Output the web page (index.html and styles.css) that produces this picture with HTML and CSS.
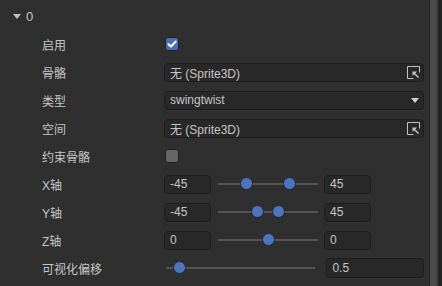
FILE: index.html
```html
<!DOCTYPE html>
<html lang="zh">
<head>
    <meta charset="UTF-8">
    <title>Inspector</title>
    <link rel="stylesheet" href="styles.css">
</head>
<body>
    <div class="inspector">
        <div class="panel">
            <div class="header">
                <span class="caret"></span>
                <span class="title">0</span>
            </div>

            <div class="row">
                <div class="label">启用</div>
                <div class="control"><span class="check on">
                    <svg width="10" height="8" viewBox="0 0 10 8"><path d="M1.5 4.2 L4 6.5 L8.6 1.6" fill="none" stroke="#fff" stroke-width="2" stroke-linecap="round" stroke-linejoin="round"/></svg>
                </span></div>
            </div>

            <div class="row">
                <div class="label">骨骼</div>
                <div class="control"><div class="field object">
                    <span>无 (Sprite3D)</span>
                    <svg class="pick" width="13" height="13" viewBox="0 0 13 13"><path d="M12.5 6.5 V0.5 H0.5 V12.5 H6.5" fill="none" stroke="#c4c4c4" stroke-width="1"/><path d="M11.5 11.5 L7 7" stroke="#c4c4c4" stroke-width="1.5"/><path d="M5.5 5.5 H10 L5.5 10 Z" fill="#c4c4c4"/></svg>
                </div></div>
            </div>

            <div class="row">
                <div class="label">类型</div>
                <div class="control"><div class="field select">
                    <span>swingtwist</span>
                    <span class="arrow"></span>
                </div></div>
            </div>

            <div class="row">
                <div class="label">空间</div>
                <div class="control"><div class="field object">
                    <span>无 (Sprite3D)</span>
                    <svg class="pick" width="13" height="13" viewBox="0 0 13 13"><path d="M12.5 6.5 V0.5 H0.5 V12.5 H6.5" fill="none" stroke="#c4c4c4" stroke-width="1"/><path d="M11.5 11.5 L7 7" stroke="#c4c4c4" stroke-width="1.5"/><path d="M5.5 5.5 H10 L5.5 10 Z" fill="#c4c4c4"/></svg>
                </div></div>
            </div>

            <div class="row">
                <div class="label">约束骨骼</div>
                <div class="control"><span class="check"></span></div>
            </div>

            <div class="row">
                <div class="label">X轴</div>
                <div class="control range">
                    <div class="field num">-45</div>
                    <div class="slider">
                        <span class="knob" style="left: 28%"></span>
                        <span class="knob" style="left: 71%"></span>
                    </div>
                    <div class="field num">45</div>
                </div>
            </div>

            <div class="row">
                <div class="label">Y轴</div>
                <div class="control range">
                    <div class="field num">-45</div>
                    <div class="slider">
                        <span class="knob" style="left: 39%"></span>
                        <span class="knob" style="left: 60%"></span>
                    </div>
                    <div class="field num">45</div>
                </div>
            </div>

            <div class="row">
                <div class="label">Z轴</div>
                <div class="control range">
                    <div class="field num">0</div>
                    <div class="slider">
                        <span class="knob" style="left: 50%"></span>
                    </div>
                    <div class="field num">0</div>
                </div>
            </div>

            <div class="row">
                <div class="label">可视化偏移</div>
                <div class="control single">
                    <div class="slider wide">
                        <span class="knob" style="left: 9.3%"></span>
                    </div>
                    <div class="field value">0.5</div>
                </div>
            </div>
        </div>
        <div class="scrollbar"><div class="thumb"></div></div>
    </div>
</body>
</html>
```

FILE: styles.css
```css
body {
    margin: 0;
    padding: 0;
    background-color: #2f2f2f;
    color: #c6c6c6;
    font-family: "Liberation Sans", "Noto Sans CJK SC", sans-serif;
    font-size: 12px;
    overflow: hidden;
}

.inspector {
    display: flex;
    width: 442px;
    height: 286px;
}

.panel {
    width: 429px;
    display: flex;
    flex-direction: column;
}

.header {
    height: 30px;
    padding-top: 2px;
    box-sizing: border-box;
    display: flex;
    align-items: center;
    padding-left: 13px;
}

.caret {
    width: 0;
    height: 0;
    border-left: 4.5px solid transparent;
    border-right: 4.5px solid transparent;
    border-top: 5px solid #c2c2c2;
    margin-right: 5px;
}

.title {
    font-size: 13px;
}

.row {
    height: 28px;
    display: flex;
    align-items: center;
}

.label {
    width: 122px;
    padding-left: 42px;
}

.control {
    width: 260px;
    display: flex;
    align-items: center;
}

/* Checkbox */
.check {
    width: 14px;
    height: 14px;
    box-sizing: border-box;
    border-radius: 3px;
    background: #666;
    border: 1px solid #222;
    display: flex;
    align-items: center;
    justify-content: center;
    margin-left: 1px;
}

.check.on {
    background: #4c6db5;
}

/* Fields */
.field {
    height: 19px;
    box-sizing: border-box;
    background: #282828;
    border: 1px solid #1d1d1d;
    border-radius: 4px;
    display: flex;
    align-items: center;
    padding-left: 5px;
    color: #c6c6c6;
}

.field.object, .field.select {
    width: 260px;
    justify-content: space-between;
    padding-right: 3px;
}

.pick {
    margin-top: 1px;
}

.arrow {
    width: 0;
    height: 0;
    border-left: 4.5px solid transparent;
    border-right: 4.5px solid transparent;
    border-top: 5px solid #d0d0d0;
    margin-right: 1px;
}

.field.num {
    width: 47px;
}

.field.value {
    width: 98px;
    height: 20px;
}

/* Sliders */
.slider {
    position: relative;
    width: 100px;
    height: 2px;
    background: #545454;
    margin: 0 6px 0 7px;
}

.slider.wide {
    width: 150px;
    margin: 0 11px 0 2px;
}

.knob {
    position: absolute;
    top: -6px;
    width: 13px;
    height: 13px;
    box-sizing: border-box;
    margin-left: -6.5px;
    border-radius: 50%;
    background: #4f73bd;
    border: 1px solid #1f2a40;
}

/* Scrollbar */
.scrollbar {
    width: 13px;
    background: #232323;
    border-left: 1px solid #262626;
    box-sizing: border-box;
}

.thumb {
    width: 6px;
    height: 100%;
    background: #4b4b4b;
    border-right: 2px solid #3e3e3e;
}
```
